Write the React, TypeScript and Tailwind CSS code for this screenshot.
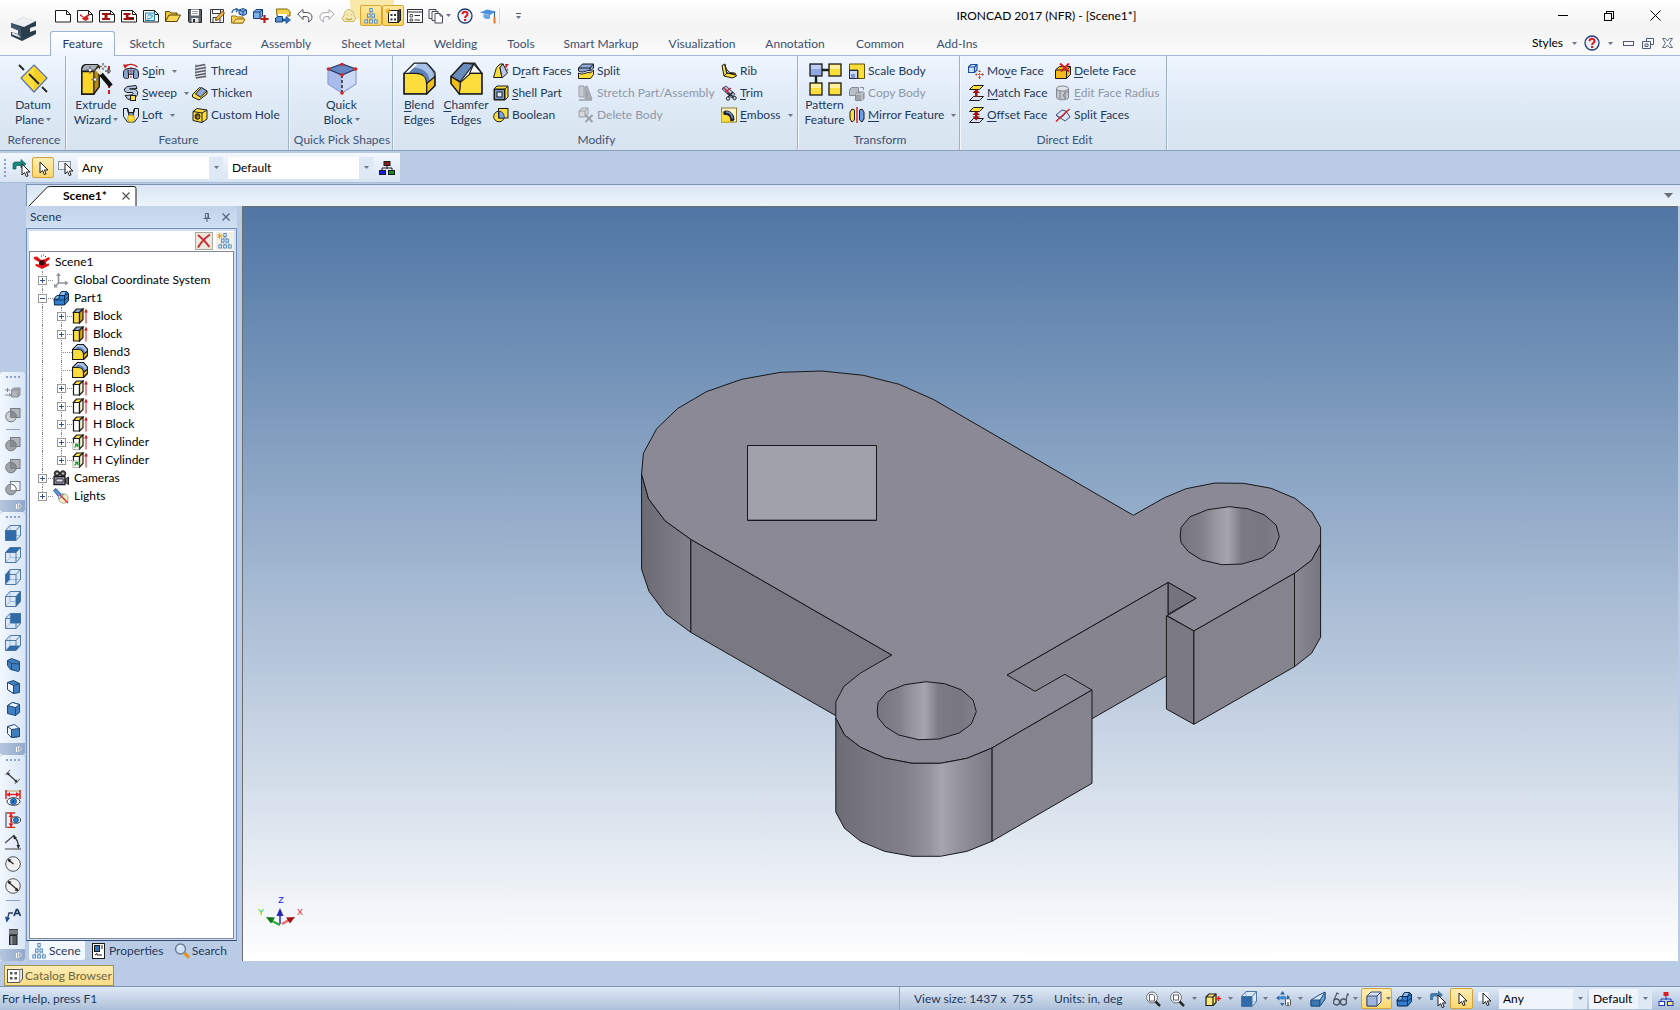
import React from "react";
import type { ReactNode } from "react";

const K = "#1c1c1c";
const Y = "#fbdd3c";
const Y2 = "#d9a514";
const G = "#9aa0a8";

function Svg({ size = 16, box = 16, children }: { size?: number; box?: number; children: ReactNode }) {
  return (
    <svg width={size} height={size} viewBox={`0 0 ${box} ${box}`} fill="none" className="shrink-0" aria-hidden="true">
      {children}
    </svg>
  );
}

/* ---------- shared glyph parts ---------- */

const page = <path d="M.5 2.500h11l4 4v7.500H.5z" fill="#fff" stroke={K} />;
const pageFold = <path d="M11.500 2.500v4h4" stroke={K} />;

function Magnifier({ inner }: { inner: ReactNode }) {
  return (
    <Svg>
      <circle cx="7" cy="6.500" r="5.500" fill="#eef3f9" stroke="#6a6f78" />
      {inner}
      <path d="M10.500 10.500l4.500 4.500" stroke="#2b2b2b" strokeWidth="2.500" />
    </Svg>
  );
}

function BlockFeature({ front, top, link }: { front: string; top: string; link?: boolean }) {
  return (
    <Svg>
      <path d="M1.500 4.500h6v10.500h-6z" fill={front} stroke={K} strokeWidth="1.200" />
      <path d="M1.500 4.500l3-3.500h6.500l-3.500 3.500z" fill={top} stroke={K} strokeWidth="1.200" />
      <path d="M7.500 4.500L11 1v10.500L7.500 15z" fill={front === "#fff" ? "#f6f2d0" : Y2} stroke={K} strokeWidth="1.200" />
      {link && (
        <>
          <rect x="1" y="9" width="6" height="6.500" fill="#fff" stroke="#8fa08f" strokeWidth=".6" />
          <path d="M2.500 13.500L5 11M3 10.500h2.800v2.800" stroke="#1c9e2a" strokeWidth="1.300" />
        </>
      )}
      <path d="M14 15.500V3" stroke="#d11a1a" />
      <path d="M12.200 4.500L14 .500l1.800 4z" fill="#d11a1a" />
    </Svg>
  );
}

function BlendGlyph({ size = 16 }: { size?: number }) {
  const w = size > 20 ? 1.2 : 2.2;
  return (
    <Svg size={size} box={32}>
      <path d="M1 11L11 1h12l8 9v13l-8 8H1z" fill="#f2f6fc" />
      <path d="M10 1h12c5 2 9 7 9 14l-8 7c0-8-3-11-11-11H2z" fill="#5f83b6" />
      <path d="M13 1h7c5 2 9 7 10 13l-4 4C25 10 20 6 9 5z" fill="#a9c1e4" />
      <path d="M1 11L11 1h4L5 11z" fill="#f2f6fc" />
      <path d="M1 11h12c6 0 10 4 10 11v9H1z" fill={Y} stroke={K} strokeWidth={w} />
      <path d="M23 21l8-7v9l-8 8z" fill="#f0be1a" stroke={K} strokeWidth={w} />
      <path d="M1 11L11 1h12l8 9v13l-8 8H1z" stroke={K} strokeWidth={w} />
    </Svg>
  );
}

function ViewCube({ face }: { face: "front" | "top" | "left" | "right" | "back" | "bottom" }) {
  const hi = "#2f6ba8";
  return (
    <Svg>
      <path d="M.5 5.500l4.500-5h10.500v10l-4.500 5H.5z" fill="#dbe8f7" />
      {face === "back" && <path d="M5 .500h10.500v10H5z" fill={hi} />}
      {face === "left" && <path d="M.5 5.500l4.500-5v10l-4.500 5z" fill={hi} />}
      {face === "bottom" && <path d="M.5 15.500l4.500-5h10.500l-4.500 5z" fill={hi} />}
      <path d="M5 .500v10h10.500M5 10.500l-4.500 5" stroke="#8fb0d4" strokeWidth=".8" />
      {face === "front" && <path d="M.5 5.500H11v10H.5z" fill={hi} />}
      {face === "top" && <path d="M.5 5.500l4.500-5h10.500l-4.500 5z" fill={hi} />}
      {face === "right" && <path d="M11 5.500l4.500-5v10l-4.500 5z" fill={hi} />}
      <path d="M.5 5.500l4.500-5h10.500v10l-4.500 5H.5zM.5 5.500H11v10M11 5.500l4.500-5" stroke="#3f6d9c" strokeWidth=".9" />
    </Svg>
  );
}

function IsoCube({ kind }: { kind: number }) {
  const hi = "#3f7fc0";
  const dk = "#1f4878";
  const lt = "#eef5fc";
  return (
    <Svg>
      {kind === 0 && (
        <>
          <path d="M2.500 3.500l4-2 8 3v9l-1 1-8-2-3-4z" fill={hi} stroke={dk} />
          <path d="M2.500 3.500l4 3 8 .5M6.500 6.500v6" stroke={dk} />
        </>
      )}
      {kind === 1 && (
        <>
          <path d="M2.500 3.500l6-2 6 3v9l-6 1-6-4z" fill={hi} stroke={dk} />
          <path d="M2.500 3.500l6 3v8l-6-4z" fill={lt} stroke={dk} />
          <path d="M8.500 6.500l6-2" stroke={dk} />
        </>
      )}
      {kind === 2 && (
        <>
          <path d="M2.500 4.500l5-3 7 2v8l-4 3-8-2z" fill={hi} stroke={dk} />
          <path d="M2.500 4.500l5-3 7 2-4 3z" fill={lt} stroke={dk} />
          <path d="M10.500 6.500v8" stroke={dk} />
        </>
      )}
      {kind === 3 && (
        <>
          <path d="M2.500 3.500l7-2 5 4v8l-8 1-4-4z" fill={lt} stroke={dk} />
          <path d="M6.500 6.500l8-1v8l-8 1z" fill={hi} stroke={dk} />
          <path d="M2.500 3.500l4 3" stroke={dk} />
        </>
      )}
    </Svg>
  );
}

function BoolGlyph({ cut }: { cut?: "sub" | "out" }) {
  return (
    <Svg>
      <rect x="5.500" y="1.500" width="9.500" height="9" fill={cut === "out" ? "#eef2f8" : "#b0b4ba"} stroke="#767c85" />
      <circle cx="6" cy="9.500" r="5.300" fill={cut === "sub" ? "#cdd1d6" : "#a2a6ac"} stroke="#767c85" />
      <path d="M5.500 10.500v-6h1c3 .5 4.700 2.500 4.700 6z" fill={cut === "out" ? "#fff" : "#888d95"} stroke="#767c85" strokeWidth=".8" />
    </Svg>
  );
}

function Cursor({ x = 0, y = 0 }: { x?: number; y?: number }) {
  return (
    <path
      transform={`translate(${x} ${y})`}
      d="M0 0v11l2.600-2.400 1.700 4 1.800-.8-1.700-3.800H8z"
      fill="#fff"
      stroke={K}
      strokeWidth="1"
    />
  );
}

function FacePlates({ arrow }: { arrow: "up" | "both" }) {
  return (
    <Svg>
      <path d="M1.500 4.500l4-4H15.500l-4 4z" fill={Y} stroke={K} />
      <path d="M1.500 15.500l4-4H15.500l-4 4z" fill="#d7e2f6" stroke={K} />
      <path d="M7 5h2.500v7H7z" fill="#a11212" />
      <path d="M4.500 8L8.200 4 12 8z" fill="#a11212" />
      {arrow === "both" && <path d="M4.500 9.500l3.700 4 3.800-4z" fill="#a11212" />}
    </Svg>
  );
}

function TreeGlyph() {
  const node = { fill: "#e4eefa", stroke: "#4d86bd", strokeWidth: 0.9 };
  return (
    <>
      <path d="M8 3L3 13M8 3l5 10M5.800 8L8 13l2.200-5" stroke="#7fa6cc" strokeWidth=".9" />
      <rect x="6.800" y=".500" width="2.400" height="3" {...node} />
      <rect x="4.500" y="6" width="2.600" height="3" {...node} />
      <rect x="8.900" y="6" width="2.600" height="3" {...node} />
      <rect x="1.800" y="12" width="2.800" height="3" {...node} />
      <rect x="6.600" y="12" width="2.800" height="3" {...node} />
      <rect x="11.400" y="12" width="2.800" height="3" {...node} />
    </>
  );
}

function PartGlyph() {
  return (
    <Svg>
      <path d="M1 9l3-3.500h2L8.500 1.500h5L15.500 3.500v7L11.500 15H1.500z" fill="#2e7fd0" stroke="#0c2444" />
      <path d="M6 5.500l2.500-4h5l-2 4zM1 9l3-3.500h2V9z" fill="#8cc0f2" stroke="#0c2444" strokeWidth=".8" />
      <path d="M6 5.500h5.500v4.500H1.200M11.500 5.500V10v5M11.500 5.500l4-2M11.500 10l4-3" stroke="#0c2444" strokeWidth=".8" />
    </Svg>
  );
}

const icons: Record<string, ReactNode> = {
  newDoc: <Svg>{page}{pageFold}</Svg>,
  newScene: (
    <Svg>
      {page}{pageFold}
      <path d="M3 6l4 3 4-2.500 1.500 1-2 1.500 1.500 2-3.500 2-4-2.500 2-1L3 8z" fill="#d81f1f" />
    </Svg>
  ),
  newRail: (
    <Svg>
      {page}{pageFold}
      <path d="M3 5h8v2H8.500v3H11v2H3v-2h2.500V7H3z" fill="#a31414" />
    </Svg>
  ),
  newRail2: (
    <Svg>
      {page}{pageFold}
      <path d="M2.500 5h7v2H7.500v2H13v3H2.500v-2h2.300V7H2.500z" fill="#a31414" />
      <path d="M8.500 10.500h4" stroke="#222" />
    </Svg>
  ),
  newDrawing: (
    <Svg>
      {page}{pageFold}
      <rect x="2.500" y="5" width="9" height="7.500" fill="#d9f0fb" stroke="#2286b8" />
      <path d="M4.500 8.500c1-2.500 4-2.500 5 0M4 10.500c2 1 4 0 5.500-3" stroke="#1f7fb5" />
    </Svg>
  ),
  open: (
    <Svg>
      <path d="M.5 13V3.500h4l1.500 1.500H12V7" fill="#f2c53d" stroke="#5b4305" />
      <path d="M.5 13.500L4 7h11.500L12 13.500z" fill="#f8d65a" stroke="#5b4305" />
    </Svg>
  ),
  save: (
    <Svg>
      <path d="M1.500 1.500h13v13h-12l-1-1z" fill="#5e636b" stroke="#22252a" />
      <rect x="4" y="1.500" width="8" height="6" fill="#fff" />
      <path d="M5 3.500h6M5 5.500h6" stroke="#9aa0a8" />
      <rect x="4.500" y="10" width="7" height="4.500" fill="#e3e6ea" />
      <rect x="6" y="11" width="2" height="3" fill="#22252a" />
    </Svg>
  ),
  saveAs: (
    <Svg>
      <path d="M1.500 1.500h13v13h-13z" fill="#f5f5f5" stroke="#33363b" />
      <path d="M3.500 1.500h8v4h-8zM4 9.500h7v5H4z" fill="#fff" stroke="#33363b" />
      <path d="M6.500 12.500L7 10l6.500-7 2 2L9 12z" fill="#f0b54a" stroke="#7a4d0c" />
    </Svg>
  ),
  partFolder: (
    <Svg>
      <path d="M.5 15V8H5l1 1h6v6z" fill="#f5cf53" stroke="#94700f" />
      <path d="M1 5c0-3 2-4 5-3.500M4.500 0L7 1.700 5 4" stroke="#2a63b0" strokeWidth="1.300" />
      <path d="M8 2l4-1.500L15.500 2v4l-3 1.500L8 6z" fill="#7fb2e8" stroke="#1c4a86" />
      <path d="M8 2l4 1.500L15.500 2M12 3.500v4" stroke="#1c4a86" />
      <path d="M2 15l3-4h9l-2 4z" fill="#fbe083" stroke="#94700f" />
    </Svg>
  ),
  addPart: (
    <Svg>
      <path d="M.5 4L3 1.500h6.500V8L7 10.500H.5z" fill="#7fb0e6" stroke="#123f7d" />
      <path d="M.5 4H7v6.500M7 4l2.500-2.500" stroke="#123f7d" />
      <path d="M11.500 7v8M7.500 11h8" stroke="#b81c1c" strokeWidth="2.200" />
    </Svg>
  ),
  exportPart: (
    <Svg>
      <path d="M1.500 1h11l2.500 2.500V8h-13z" fill="#f7d447" stroke="#7c6410" />
      <rect x="3" y="6" width="9" height="3" fill="#fff" />
      <path d="M.5 10L3 8.500h4.500V14H.5z" fill="#5b92d2" stroke="#123f7d" />
      <path d="M8 11h3V8.500l4.500 3.500-4.500 3.500V13H8z" fill="#2f74c0" stroke="#123f7d" strokeWidth=".7" />
    </Svg>
  ),
  undo: (
    <Svg>
      <path d="M.8 6L6 1.500v3h3.500c3.500 0 5.500 2 5.500 4.500s-1.500 4-3.500 5c.8-2.500.2-5.500-2-5.500H6v3z" fill="#fff" stroke="#4a4f57" />
    </Svg>
  ),
  redo: (
    <Svg>
      <path d="M15.200 6L10 1.500v3H6.500C3 4.500 1 6.500 1 9s1.500 4 3.500 5C3.700 11.500 4.300 8.500 6.500 8.500H10v3z" fill="#fff" stroke="#a2a7ae" />
    </Svg>
  ),
  sceneBrowser: (
    <Svg>
      <path d="M3 8c0-4 2.500-6.500 5-6.500S13 4 13 8l2 2-2 3.500H3L1 10z" fill="#f3e9b4" stroke="#cdb865" />
      <path d="M5.500 7h1M9.500 7h1M5 10.500c2 1.500 4 1.500 6 0" stroke="#c2a548" strokeWidth="1.200" />
    </Svg>
  ),
  tree: <Svg><TreeGlyph /></Svg>,
  catalog: (
    <Svg>
      <path d="M3.500 2.500h9.500v12H3.500z" fill="#fff" stroke={K} />
      <path d="M13 2.500l2.500-1v11l-2.500 2z" fill="#4b4b4b" stroke={K} />
      <path d="M5.500 6h2v2h-2zM9 6h2v2H9zM5.500 10.500h2v2h-2zM9 10.500h2v2H9z" fill="#333" />
      <path d="M3 0v6M0 3h6M1 1l4 4M5 1L1 5" stroke="#f0a81c" strokeWidth=".9" />
    </Svg>
  ),
  props: (
    <Svg>
      <rect x=".5" y="1.500" width="15" height="13" fill="#fff" stroke="#2d2f33" />
      <path d="M.5 4h15" stroke="#2d2f33" />
      <path d="M3 6.500h2.500V9H3zM3 11h2.500v2H3z" stroke="#2d2f33" strokeWidth=".8" />
      <path d="M7.500 7.500H13M7.500 12H13" stroke="#2d2f33" />
    </Svg>
  ),
  copies: (
    <Svg>
      <path d="M1 1.500h7v9H1z" fill="#fff" stroke="#45494f" />
      <path d="M4 3.500h6v9H4z" fill="#fff" stroke="#45494f" />
      <path d="M7 5.500h5l2.500 2.500v7H7z" fill="#fff" stroke="#45494f" />
      <path d="M12 5.500V8h2.500" stroke="#45494f" />
    </Svg>
  ),
  help: (
    <Svg>
      <circle cx="8" cy="8" r="7" fill="#eef3fb" stroke="#1e3c74" strokeWidth="1.300" />
      <path d="M5.500 6.200c0-3.200 5-3.200 5-.2 0 2-2.400 2-2.400 4" stroke="#e01818" strokeWidth="2" />
      <rect x="7" y="11" width="2.200" height="2" fill="#e01818" />
    </Svg>
  ),
  school: (
    <Svg>
      <path d="M0 4.500L7 1.500l9 2L10 7z" fill="#4d8fdc" />
      <path d="M3.500 6v3.500c2 1.800 4.500 2 6.500 1V7z" fill="#6aa5e6" />
      <path d="M14.500 4v5" stroke="#2b57a5" />
      <path d="M13.500 9h2v6.500h-2z" fill="#f0742a" />
    </Svg>
  ),
  datum: (
    <Svg size={32} box={32}>
      <path d="M17 3l13 13-13 14L4 16z" fill={Y} stroke="#5a6fa8" strokeWidth="1.200" />
      <path d="M17 5l11 11-11 12V16z" fill="#f3c51c" opacity=".6" />
      <path d="M2 3l5 5M12 12l10 10M25 25l5 5" stroke="#222" strokeWidth="1.800" />
    </Svg>
  ),
  extrude: (
    <Svg size={34} box={34}>
      <path d="M2 8c0-4 2-6 5-6h12l2 3v20l-6 8H2z" fill={K} />
      <path d="M3 9.500h12V32H3z" fill="#fbd62a" stroke={K} strokeWidth="1.300" />
      <path d="M15 9.500l5-6v21l-5 7z" fill="#b98d10" stroke={K} />
      <path d="M3 8.500C4 4 6 3 8 3h11l-4 5.500z" fill="#a7b0bb" />
      <path d="M30 32v-9M30 4v7" stroke="#d41c1c" strokeWidth="2" strokeDasharray="4 2" />
      <path d="M21 11l11 13" stroke="#111" strokeWidth="4.500" />
      <path d="M18 7l4.500 5" stroke="#e4e4e4" strokeWidth="4" />
      <path d="M11 4v8M7 8h8M24 1v7M20.500 4.500h7M16 14v7M12.500 17.500h7M29 6v6M26 9h6" stroke="#666" strokeWidth="1.300" />
      <path d="M24 3l1.500 1.500L24 6l-1.500-1.500zM11 6.500L12.500 8 11 9.500 9.500 8zM16 16l1.500 1.500L16 19l-1.500-1.500z" fill="#fff" />
    </Svg>
  ),
  spin: (
    <Svg>
      <path d="M.5 9c0-5 15-5 15 0v4.500c0 2-4 3-5 1.500v-3c0-1-5-1-5 0v3c-1 1.500-5 .5-5-1.500z" fill="#88a4cf" stroke={K} />
      <path d="M5.500 12L5 7M10.500 12L11 7" stroke={K} />
      <path d="M2.500 3.500c3-3 8-3 12 .5" stroke="#cc2020" strokeWidth="1.300" />
      <path d="M0 1.500h5L2 6z" fill="#cc2020" />
      <path d="M8 4v11" stroke="#cc2020" strokeDasharray="2 1" />
    </Svg>
  ),
  sweep: (
    <Svg>
      <path d="M13 .500L5 1.500C0 3 .5 7.500 5 7.500h4c2 .5 1.500 2-1 2.500l-6 .5 3 4 6-1.500c5-2 5-8.500-.5-9L6.500 4 14 3.500z" fill="#b8c8e2" stroke={K} />
      <rect x="7.500" y="10.500" width="5" height="5" fill={Y} stroke={K} />
    </Svg>
  ),
  loft: (
    <Svg>
      <path d="M.5 1.500h4l1 4h5l1-4h4v8l-4 5.500h-7l-4-5.500z" fill="#dde6f5" stroke={K} />
      <path d="M4.500 1.500L6 9h4l1.500-7.500-1 4h-5z" fill="#6f8fc0" stroke={K} />
      <circle cx="8" cy="11.500" r="3.400" fill={Y} stroke={Y2} />
    </Svg>
  ),
  thread: (
    <Svg>
      <path d="M4 1h9v14H4z" fill="#e8eaee" />
      <path d="M3 3.500L13 1.500M3 6.500l11-2M3 9.500l11-2M3 12.500l11-2M4 15l10-1.800" stroke="#555c66" strokeWidth="1.400" />
      <path d="M4 1v14M13 1v14" stroke="#7c838d" strokeWidth=".7" />
    </Svg>
  ),
  thicken: (
    <Svg>
      <path d="M.5 9.500l7-7L15 6v3l-8 6-6.500-3z" fill={Y} stroke={K} />
      <path d="M3.500 9l6-6.500L15 6l-6.500 6z" fill="#8faad6" stroke={K} />
    </Svg>
  ),
  hole: (
    <Svg>
      <path d="M1 4.500l4-3 10 1.500v9l-5 3.500-9-2z" fill={Y} stroke={K} />
      <path d="M1 4.500l9 1.500 5-3M10 6v9.500" stroke={K} />
      <ellipse cx="5.500" cy="9.500" rx="2.500" ry="2.800" fill="#5c4a12" stroke={K} />
      <circle cx="6" cy="10" r="1.200" fill="#b98e1a" />
    </Svg>
  ),
  quickBlock: (
    <Svg size={34} box={34}>
      <path d="M3 7l14 6v18L3 22z" fill="#a9bbec" />
      <path d="M17 13l14-6v15l-14 9z" fill="#cddaf6" />
      <path d="M3 7l14-5 14 5-14 6z" fill="#6588c4" stroke="#27345e" strokeWidth="1.200" />
      <path d="M3 7v15l14 9 14-9V7" stroke="#8da2d2" strokeWidth="1.200" />
      <path d="M17 13v17" stroke={K} strokeWidth="1.400" strokeDasharray="3 2" />
      <circle cx="3.500" cy="7" r="1.800" fill="#e02020" />
      <circle cx="17" cy="2.500" r="1.800" fill="#e02020" />
      <circle cx="30.500" cy="7" r="1.800" fill="#e02020" />
      <circle cx="17" cy="13" r="1.800" fill="#e02020" />
      <circle cx="17" cy="31" r="1.800" fill="#e02020" />
    </Svg>
  ),
  blend: <BlendGlyph size={33} />,
  chamfer: (
    <Svg size={33} box={32}>
      <path d="M1 14L13 1h11l7 10v20H9L1 21z" fill="#f2f6fc" />
      <path d="M1 14L13 1l10 1L10 19z" fill="#6a8cbd" stroke={K} strokeWidth="1.100" />
      <path d="M23 2l8 9H19z" fill="#fff" stroke={K} strokeWidth="1.100" />
      <path d="M10 20l10-9h11v20H9z" fill={Y} stroke={K} strokeWidth="1.100" />
      <path d="M1 14l9 6-1 11-8-10z" fill="#f0be1a" stroke={K} strokeWidth="1.100" />
      <path d="M1 14L13 1h11l7 10v20H9L1 21z" stroke={K} strokeWidth="1.200" />
    </Svg>
  ),
  blendSm: <BlendGlyph />,
  draft: (
    <Svg>
      <path d="M.5 14.500l3-10L7 1h3.500L7 4.500l2 10z" fill={Y} stroke={K} />
      <path d="M7 4.500L10 1l4.500 9-5.500 5z" fill="#b7c8e8" stroke={K} />
      <path d="M12.500 3l2.500 5" stroke="#cc2020" strokeWidth="1.200" strokeDasharray="2 1" />
      <path d="M12 1h4l-3 3.500z" fill="#cc2020" />
    </Svg>
  ),
  shell: (
    <Svg>
      <path d="M1 4l3-3h11v11l-3 3H1z" fill={Y} stroke={K} />
      <path d="M1 4h11v11M12 4l3-3" stroke={K} />
      <rect x="1.500" y="4.500" width="10" height="10" fill="#7c9bd0" stroke={K} />
      <rect x="4" y="7" width="5" height="5" fill="#dfe9f9" stroke={K} />
    </Svg>
  ),
  bool: (
    <Svg>
      <circle cx="6" cy="9.500" r="5.300" fill={Y} stroke={K} />
      <rect x="5.500" y="1.500" width="9.500" height="9.500" fill={Y} stroke={K} />
      <path d="M6 11V4.200c3-.2 5.500 2.800 5.300 6.800z" fill="#7fa4e2" stroke="#233d77" />
    </Svg>
  ),
  split: (
    <Svg>
      <path d="M.5 5l4-4h11v4l-3 3c-4-2-6 3-12 0z" fill="#8ea9dc" stroke={K} />
      <path d="M.5 5H12l3.500-4M12 5v3" stroke={K} />
      <path d="M.5 10c5 3 8-2 12 0l3-3v4.500l-3 4H.5z" fill={Y} stroke={K} />
    </Svg>
  ),
  stretch: (
    <Svg>
      <path d="M1 1h5v11H1z" fill="#c8ccd2" stroke={G} />
      <path d="M7 2l2-1 5 13H7z" fill="#aab0b8" stroke={G} />
      <path d="M1 15h13M9 6v6" stroke={G} strokeWidth="1.500" />
    </Svg>
  ),
  deleteBody: (
    <Svg>
      <path d="M1 4l3-3h6v6l-3 3H1z" fill="#d5d8dc" stroke={G} />
      <path d="M1 4h6v6M7 4l3-3" stroke={G} />
      <path d="M7.500 8l7 7M14.500 8l-7 7" stroke={G} strokeWidth="2" />
    </Svg>
  ),
  rib: (
    <Svg>
      <path d="M1 2.500L4 1l1.500 8.500L14 10l1.500 3-4 2L3 13z" fill={Y} stroke={K} />
      <path d="M4 2c1 5 4 8 9 9l-7-1z" fill="#fff" stroke={K} />
      <path d="M3 13l3-3 9 2" stroke={K} />
    </Svg>
  ),
  trim: (
    <Svg>
      <path d="M1 4l4-3 9 8-3 4z" fill="#b3c4e6" stroke="#3a4d7a" />
      <path d="M2 2l8 8M4 7l6-4" stroke="#c22222" strokeWidth="1.200" />
      <path d="M6 8l7 4M12 7l-5 5" stroke={K} strokeWidth="1.200" />
      <circle cx="7" cy="13.500" r="1.700" stroke={K} />
      <circle cx="13.500" cy="13" r="1.700" stroke={K} />
    </Svg>
  ),
  emboss: (
    <Svg>
      <rect x=".5" y="1" width="15" height="14" fill="#fff6c8" stroke="#8b7a2a" />
      <path d="M.5 5v10h9c1-5-3-10-9-10z" fill={Y} stroke={Y2} />
      <path d="M3 4.500c5-2 10 2 10 8.500l-3 1c0-5-3-7-7-6.500z" fill="#16233f" stroke={K} />
      <path d="M5 5c4 0 6 2.500 6.500 6.500" stroke="#7fa0dc" strokeWidth="1.300" />
    </Svg>
  ),
  pattern: (
    <Svg size={34} box={34}>
      <path d="M8 8h17M8 8v17" stroke="#16241a" strokeWidth="2.400" />
      <rect x="2" y="2" width="12" height="12" fill="#92a8e2" stroke={K} strokeWidth="1.300" />
      <rect x="21" y="2" width="12" height="12" fill={Y} stroke={K} strokeWidth="1.300" />
      <rect x="2" y="21" width="12" height="12" fill={Y} stroke={K} strokeWidth="1.300" />
      <rect x="21" y="21" width="12" height="12" fill={Y} stroke={K} strokeWidth="1.300" />
      <path d="M3 3h10v4H3z" fill="#c0cdf2" />
      <path d="M22 3h10v4H22zM3 22h10v4H3zM22 22h10v4H22z" fill="#fdf0a0" />
    </Svg>
  ),
  scale: (
    <Svg>
      <path d="M.5 1h15v14.500H9V7H.5z" fill={Y} stroke="#5e5210" />
      <rect x=".5" y="7.500" width="8" height="8" fill="#cbd8f4" stroke="#1f2c55" />
      <rect x="2" y="11" width="4" height="4" fill="#7d97da" />
    </Svg>
  ),
  copyBody: (
    <Svg>
      <path d="M.5 4.500l2-2h7v6l-2 2h-7z" fill="#b8bdc4" stroke="#868c95" />
      <path d="M6.500 9l2-2H15v6.500l-2 2H6.500z" fill="#9da3ab" stroke="#868c95" />
      <path d="M6.500 9H13v6.500M13 9l2-2" stroke="#d6d9dd" />
      <path d="M11 2.500h3.500V5" stroke="#868c95" />
    </Svg>
  ),
  mirror: (
    <Svg>
      <path d="M1 5l2-3 2.500 1v10L3 15l-2-3z" fill={Y} stroke={K} />
      <path d="M15 5l-2-3-2.500 1v10L13 15l2-3z" fill="#6f9be0" stroke={K} />
      <path d="M8 0v16" stroke="#d01c1c" strokeWidth="1.400" />
    </Svg>
  ),
  moveFace: (
    <Svg>
      <path d="M.5 4L3 1.500h6V7L6.500 9.500h-6z" fill="#cfe2fa" stroke="#1b4fa0" strokeWidth="1.200" />
      <path d="M.5 4h6v5.500M6.500 4L9 1.500" stroke="#1b4fa0" strokeWidth="1.200" />
      <path d="M11.500 7.500v8M7.500 11.500h8" stroke="#b84a3a" strokeDasharray="1.500 1" />
      <path d="M10 9l1.500-2L13 9zM10 14l1.500 2 1.500-2zM9 10l-2 1.500L9 13zM14 10l2 1.500-2 1.500z" fill="#b84a3a" />
    </Svg>
  ),
  matchFace: <FacePlates arrow="up" />,
  offsetFace: <FacePlates arrow="both" />,
  deleteFace: (
    <Svg>
      <path d="M.5 7l4-3.500h11v8l-4 4H.5z" fill="#f4b91c" stroke={K} />
      <path d="M.5 7h11v8.500M11.500 7l4-3.500" stroke={K} />
      <path d="M5 .500l9 8M14 .500l-8 8" stroke="#d42020" strokeWidth="2" />
    </Svg>
  ),
  editRadius: (
    <Svg>
      <path d="M1.500 3.500v9c0 3 12 3 12 0v-9z" fill="#c3c7cd" stroke="#80868f" />
      <ellipse cx="7.500" cy="3.500" rx="6" ry="2.500" fill="#dfe2e6" stroke="#80868f" />
      <path d="M5 6v8M10 6v8M13.500 6L8 10l2 3" stroke="#80868f" />
    </Svg>
  ),
  splitFaces: (
    <Svg>
      <path d="M1 8l6-5 4 1 4 6-5 4z" fill="#dbe6f8" stroke="#3c4f7c" />
      <path d="M1 8c2 3 6 3 8 0l2-4" stroke="#3c4f7c" />
      <path d="M1 14.500L14.500 2" stroke="#d42020" strokeWidth="1.400" />
    </Svg>
  ),
  goCursor: (
    <Svg size={18} box={18}>
      <path d="M1 10V5.500C1 3.500 2 3 4 3h5V.500L14 5 9 9V6.500H5c-1 0-1 .5-1 3.500z" fill="#168a7c" stroke="#0b5d54" strokeWidth=".7" />
      <Cursor x={10} y={5} />
    </Svg>
  ),
  goCursorGray: (
    <Svg size={18} box={18}>
      <path d="M1 10V5.500C1 3.500 2 3 4 3h5V.500L14 5 9 9V6.500H5c-1 0-1 .5-1 3.500z" fill="#4a7ba8" />
      <Cursor x={9} y={5} />
    </Svg>
  ),
  pointer: <Svg><Cursor x={5} y={2} /></Svg>,
  boxSelect: (
    <Svg>
      <rect x=".5" y="1.500" width="12" height="8" fill="#eef2f6" stroke="#8c949e" />
      <Cursor x={7} y={3} />
    </Svg>
  ),
  boxSelect2: (
    <Svg>
      <path d="M0 1h11v9H0z" fill="#f4f7fb" />
      <Cursor x={5} y={2} />
    </Svg>
  ),
  org: (
    <Svg>
      <path d="M8 5v4M3 11V8h10v3" stroke={K} />
      <rect x="5" y="1.500" width="6" height="4" fill="#8d1c1c" stroke={K} />
      <rect x=".5" y="10.500" width="6" height="4" fill="#1a1ae0" stroke={K} />
      <rect x="9.500" y="10.500" width="6" height="4" fill="#118a1e" stroke={K} />
    </Svg>
  ),
  orgBlue: (
    <Svg>
      <path d="M8 5v4M3 11V8h10v3" stroke="#2038b8" />
      <rect x="5.500" y="1" width="5" height="4" fill="#d82020" />
      <rect x="1" y="10.500" width="5.500" height="4" fill="#fff" stroke="#2038b8" />
      <rect x="9.500" y="10.500" width="5.500" height="4" fill="#f4e37a" stroke="#2038b8" />
    </Svg>
  ),
  sceneRoot: (
    <Svg>
      <path d="M0 3l3-.5L7 6l3-.5L15 3l1 2-4 3 .5 2L15 9.500v2L8 15l-7-3.500 1-1.500 3 .5V8L0 5z" fill="#e01414" />
      <path d="M6 6.500l4-.5 1 4-3 1.500L5 10z" fill="#1b0808" opacity=".85" />
      <path d="M7 2h1M11 2.500h1M9 1h1" stroke="#333" />
    </Svg>
  ),
  axes: (
    <Svg>
      <path d="M5.500 11V2M5.500 11H14M5.500 11L2 14.500" stroke="#8f959d" strokeWidth="1.600" />
      <path d="M3 4l2.500-3.500L8 4zM12 8.500l3.500 2.500L12 13.500zM1 11.500v4h4z" fill="#8f959d" />
    </Svg>
  ),
  part: <PartGlyph />,
  block: <BlockFeature front={Y} top="#8faad0" />,
  hBlock: <BlockFeature front="#fff" top={Y} />,
  hCyl: <BlockFeature front="#fff" top={Y} link />,
  camera: (
    <Svg>
      <circle cx="4" cy="3.500" r="2.700" fill="#4a4a4a" stroke={K} />
      <circle cx="10" cy="3.500" r="2.700" fill="#4a4a4a" stroke={K} />
      <circle cx="4" cy="3.500" r="1" fill="#d8d8d8" />
      <circle cx="10" cy="3.500" r="1" fill="#d8d8d8" />
      <path d="M1 6.500h11v8H1z" fill="#9c94b4" stroke={K} strokeWidth="1.300" />
      <path d="M3 9h7v3H3z" fill="#e4e0f0" stroke={K} strokeWidth=".8" />
      <path d="M12.500 9l3-2v7.500l-3-2z" fill="#6b6b6b" stroke={K} />
    </Svg>
  ),
  light: (
    <Svg>
      <path d="M.5 2.500L3 .500 8 6 5.500 8.500z" fill="#5b94d6" stroke="#1c3f74" strokeWidth=".8" />
      <circle cx="10.500" cy="10.500" r="4.700" fill="#f6efc6" stroke="#a8a48a" />
      <path d="M5 8.500l2.500-2.500 3 .5-4 4.500z" fill="#cfe0f2" stroke="#51739e" strokeWidth=".8" />
      <path d="M7 7l8 8" stroke="#d02020" strokeWidth="1.200" />
    </Svg>
  ),
  clear: (
    <Svg>
      <path d="M2 2c4 3 8 7 11.500 12M14 1.500C9 5 5 9 2 14.500" stroke="#c8303a" strokeWidth="2" />
    </Svg>
  ),
  treeStar: (
    <Svg>
      <TreeGlyph />
      <path d="M2.500 0v6M0 3h6M.8 1l4 4M4.800 1l-4 4" stroke="#e6a31c" strokeWidth=".9" />
    </Svg>
  ),
  propsTab: (
    <Svg>
      <rect x="1.500" y=".500" width="12" height="15" fill="#fff" stroke={K} />
      <rect x="3.500" y="2.500" width="5" height="6" fill="#2f6fc0" stroke={K} />
      <path d="M10 3h2M10 5h2M4 12l2-1.500V12h5" stroke={K} />
    </Svg>
  ),
  search: (
    <Svg>
      <circle cx="6.500" cy="6" r="5" fill="#cfe3f8" stroke="#6b7f98" strokeWidth="1.400" />
      <path d="M4 5c.5-1.500 2-2.300 3.500-2" stroke="#fff" />
      <path d="M10.500 10l4.500 4.500" stroke="#e0951c" strokeWidth="3.200" />
    </Svg>
  ),
  catalogBox: (
    <Svg>
      <rect x=".5" y="1.500" width="12" height="13" fill="#fff" stroke="#555" />
      <path d="M12.500 1.500l3-.5v10l-3 3.500" fill="#e4e4e4" stroke="#555" />
      <path d="M3 4h2.500v2.500H3zM7.500 4H10v2.500H7.500zM3 9h2.500v2.500H3zM7.500 9H10v2.500H7.500z" fill="#555" />
    </Svg>
  ),
  sheetGray: (
    <Svg>
      <path d="M6.500 5l2-2H15v7l-2 2H6.500z" fill="#b2b6bc" stroke="#868b93" />
      <path d="M6.500 5H13v7M13 5l2-2" stroke="#868b93" />
      <path d="M0 5h5M2.500 3v4M0 10h5M4 8.500L6 10l-2 1.500" stroke="#868b93" />
    </Svg>
  ),
  bool1: <BoolGlyph cut="sub" />,
  bool2: <BoolGlyph />,
  bool3: <BoolGlyph />,
  bool4: <BoolGlyph cut="out" />,
  dimAlign: (
    <Svg>
      <path d="M2.500 5.500l9 8" stroke="#333" strokeWidth="1.200" />
      <path d="M.5 7L5 2M9.500 16l5.500-5" stroke="#555" />
      <path d="M1.500 4.500l3.500.5-2 2.500zM12.800 14.500l-3.500-.5 2-2.500z" fill="#333" />
    </Svg>
  ),
  dimH: (
    <Svg>
      <path d="M0 1h16" stroke="#cfc7a8" strokeWidth="2" />
      <path d="M1 0v9M15 0v9M1 4.500h14" stroke="#e02020" strokeWidth="1.500" />
      <path d="M1.500 4.500L5 2v5zM14.500 4.500L11 2v5z" fill="#e02020" />
      <ellipse cx="8.500" cy="11.500" rx="6.500" ry="3.800" fill="#fff" stroke="#333" />
      <circle cx="8.500" cy="11.500" r="3" fill="#2b86da" stroke="#0e4f96" />
      <circle cx="8.500" cy="11.500" r="1" fill="#0a2344" />
    </Svg>
  ),
  dimV: (
    <Svg>
      <path d="M1 0v16" stroke="#333" />
      <path d="M2 1h8M2 15.500h8M6 1v14" stroke="#e02020" strokeWidth="1.500" />
      <path d="M6 1.500L3.500 5h5zM6 15l-2.500-3.500h5z" fill="#e02020" />
      <ellipse cx="11" cy="8" rx="4.500" ry="3.200" fill="#fff" stroke="#333" />
      <circle cx="11" cy="8" r="2.400" fill="#2b86da" stroke="#0e4f96" />
    </Svg>
  ),
  dimAngle: (
    <Svg>
      <path d="M0 9l9.500-8M0 15h16" stroke="#444" strokeWidth="1.200" />
      <path d="M9 3c3 2 4.500 6 4.500 11" stroke="#222" strokeWidth="1.200" />
      <path d="M8 1l4 2.500-3 2zM13.500 15l-2-4h3.500z" fill="#222" />
    </Svg>
  ),
  dimRadius: (
    <Svg>
      <circle cx="8" cy="8" r="7.300" fill="#f1f1f1" stroke="#555" />
      <path d="M3.500 4l5 4" stroke="#222" strokeWidth="1.200" />
      <path d="M2.500 3l4 .5L4 6.500z" fill="#222" />
    </Svg>
  ),
  dimDiameter: (
    <Svg>
      <circle cx="8" cy="8" r="7.300" fill="#f1f1f1" stroke="#555" />
      <path d="M3.500 4l9 8" stroke="#222" strokeWidth="1.200" />
      <path d="M2.500 3l4 .5L4 6.500zM13.500 13l-4-.5 2.500-3z" fill="#222" />
    </Svg>
  ),
  leader: (
    <Svg>
      <path d="M2 14L4 6h4" stroke="#2a3f5f" strokeWidth="1.300" />
      <path d="M0 9.500l1.500 6L5 11z" fill="#1f4f86" />
      <path d="M9 9l2.500-6.500h1L15.500 9M10 6.500h4.500" stroke="#1d3558" strokeWidth="1.700" />
    </Svg>
  ),
  bolt: (
    <Svg>
      <path d="M4.500 6.500h7.500V16H4.500z" fill="#555a60" stroke="#222" />
      <path d="M6.500 7v8.500" stroke="#9da2a8" strokeWidth="1.500" />
      <path d="M4 .800h9M4 3h9M4 5.200h9" stroke="#111" strokeWidth="1.200" />
    </Svg>
  ),
  zoomPage: <Magnifier inner={<path d="M4.500 3.500h3.500l1.500 1.500v5h-5z" fill="#fff" stroke="#444" strokeWidth=".8" />} />,
  zoomWin: <Magnifier inner={<rect x="4.500" y="4" width="5" height="5" fill="#fff" stroke="#444" strokeWidth=".8" />} />,
  camView: (
    <Svg>
      <path d="M1 6l3-3h7v8.500l-3 3H1z" fill="#fbe873" stroke={K} strokeWidth="1.200" />
      <path d="M1 6h7v8.500M8 6l3-3" stroke={K} strokeWidth="1.200" />
      <path d="M10.500 7.500H16M13.500 5v5" stroke="#e02020" strokeWidth="1.300" />
    </Svg>
  ),
  cubeBlue: <ViewCube face="front" />,
  orbit: (
    <Svg>
      <path d="M6.500 0L9 3.500H4zM0 7l3.500-2.500v5zM14 6l-3-2v4zM6.500 15L4 12h4z" fill="#2e6398" />
      <path d="M3 7c2-3 6-3 8 0-2 2-6 2-8 0z" fill="#3b8ad8" />
      <path d="M9.500 8.500c0-1 5-1 5 0v5.500c0 1-5 1-5 0z" fill="#fff" stroke="#555" />
      <path d="M11 11h2v3h-2z" fill="#888" />
    </Svg>
  ),
  wedge: (
    <Svg>
      <path d="M1 9l9-5.500 5-2.500v7l-5 7H1z" fill="#d5e4f4" stroke="#1f4f80" />
      <path d="M1 9h9v6H1z" fill="#3f79b3" stroke="#1f4f80" />
      <path d="M10 9l5-8v7l-5 7z" fill="#6ea0d2" stroke="#1f4f80" />
    </Svg>
  ),
  glasses: (
    <Svg>
      <circle cx="3.500" cy="11" r="3" stroke="#4b5563" strokeWidth="1.300" />
      <circle cx="10.500" cy="11" r="3" stroke="#4b5563" strokeWidth="1.300" />
      <path d="M1 9l3-7 2 1M13 9l1.500-6 1.500 1M6.500 10.500h1" stroke="#4b5563" strokeWidth="1.200" />
    </Svg>
  ),
  cubePlain: (
    <Svg>
      <path d="M1 5l4-4h10v10l-4 4H1z" fill="#d8e2f4" stroke="#3b4d74" />
      <path d="M1 5h10v10H1zM11 5l4-4" fill="#9fb5de" stroke="#3b4d74" />
    </Svg>
  ),
  ...Object.fromEntries(
    (["front", "top", "left", "right", "back", "bottom"] as const).map((f) => ["v_" + f, <ViewCube face={f} />]),
  ),
  iso0: <IsoCube kind={0} />,
  iso1: <IsoCube kind={1} />,
  iso2: <IsoCube kind={2} />,
  iso3: <IsoCube kind={3} />,
};

/* ---------- small pieces ---------- */

function Caret() {
  return (
    <svg width="5" height="3" viewBox="0 0 5 3" className="inline-block shrink-0 text-[#6b7686]" aria-hidden="true">
      <path d="M0 0h5L2.500 3z" fill="currentColor" />
    </svg>
  );
}

/* "_" marks the access key that follows it */
function Mnemonic({ text }: { text: string }) {
  const i = text.indexOf("_");
  if (i < 0) return <>{text}</>;
  return (
    <>
      {text.slice(0, i)}
      <span className="underline underline-offset-2">{text[i + 1]}</span>
      {text.slice(i + 2)}
    </>
  );
}

function SmallButton({ icon, label, menu, disabled }: { icon: string; label: string; menu?: boolean; disabled?: boolean }) {
  return (
    <button disabled={disabled} className={"flex h-[22px] items-center gap-[3px] whitespace-nowrap " + (disabled ? "text-[#8d97a6]" : "text-[#1e395b]")}>
      {icons[icon]}
      <span>
        <Mnemonic text={label} />
      </span>
      {menu && (
        <span className="flex pl-1">
          <Caret />
        </span>
      )}
    </button>
  );
}

function BigButton({ icon, lines, menu, width }: { icon: string; lines: [string, string]; menu?: boolean; width: string }) {
  return (
    <button className={"flex shrink-0 flex-col items-center pt-[2px] pl-[2px] leading-[15px] whitespace-nowrap text-[#1e395b] " + width}>
      <span className="flex h-[35px] items-start justify-center">{icons[icon]}</span>
      <span>
        <Mnemonic text={lines[0]} />
      </span>
      <span className="flex items-center gap-[2px]">
        {lines[1]}
        {menu && <Caret />}
      </span>
    </button>
  );
}

function Group({ label, width, children }: { label: string; width: string; children: ReactNode }) {
  return (
    <section aria-label={label} className={"flex shrink-0 flex-col border-r border-[#9db0cc] shadow-[1px_0_0_#f3f8fe] " + width}>
      <div className="flex h-[74px] pt-1">{children}</div>
      <div className="flex h-5 items-center justify-center pl-[3px] whitespace-nowrap text-[#3b5377]">{label}</div>
    </section>
  );
}

function Col({ width = "", children }: { width?: string; children: ReactNode }) {
  return <div className={"flex shrink-0 flex-col items-start " + width}>{children}</div>;
}

function Combo({ label, value, options, className }: { label: string; value: string; options: string[]; className: string }) {
  return (
    <div className={"relative flex items-center " + className}>
      <select aria-label={label} defaultValue={value} className="size-full appearance-none rounded-none bg-transparent pt-px pr-4 pl-1 text-black outline-none">
        {options.map((o) => (
          <option key={o}>{o}</option>
        ))}
      </select>
      <span className="pointer-events-none absolute inset-y-0 right-0 flex w-[14px] items-center justify-center bg-[#dfe9f6]">
        <Caret />
      </span>
    </div>
  );
}

/* ---------- title bar and ribbon ---------- */

const quickIcons: [string, string][] = [
  ["newDoc", "New"],
  ["newScene", "New scene"],
  ["newRail", "New drawing"],
  ["newRail2", "New layout"],
  ["newDrawing", "New sheet"],
  ["open", "Open"],
  ["save", "Save"],
  ["saveAs", "Save as"],
  ["partFolder", "Insert part"],
  ["addPart", "Add part"],
  ["exportPart", "Export part"],
  ["undo", "Undo"],
  ["redo", "Redo"],
  ["sceneBrowser", "Browser"],
  ["tree", "Scene browser"],
  ["catalog", "Catalog browser"],
  ["props", "Properties"],
];

const tabs: [string, string][] = [
  ["Sketch", "w-16"],
  ["Surface", "w-[66px]"],
  ["Assembly", "w-[82px]"],
  ["Sheet Metal", "w-[92px]"],
  ["Welding", "w-[73px]"],
  ["Tools", "w-[58px]"],
  ["Smart Markup", "w-[102px]"],
  ["Visualization", "w-[100px]"],
  ["Annotation", "w-[86px]"],
  ["Common", "w-[84px]"],
  ["Add-Ins", "w-[70px]"],
];

function Header() {
  return (
    <header className="relative flex h-[55px] shrink-0 bg-linear-to-b from-white via-[#f3f3f4] to-[#fbfbfb]">
      <div className="pointer-events-none absolute top-0 left-[350px] h-6 w-11 overflow-hidden">
        <div className="-mt-5 size-11 rounded-full bg-[#f8e9a8]" />
      </div>
      <button aria-label="Application menu" className="flex w-[50px] shrink-0 items-center justify-center pr-[2px]">
        <svg width="28" height="28" viewBox="0 0 28 28" aria-hidden="true">
          <path d="M1 9l12-6 13 4-12 6z" fill="#eceff2" stroke="#c3cad1" strokeWidth=".6" strokeDasharray="1 1" />
          <path d="M1 9l13 4 12-6v5l-6 2v4l6-2v4l-14 7-11-5v-4l7 2v-4l-7-3z" fill="#2a3d4c" />
          <path d="M1 9l10 4.500V24L8 20.500v-4l-7-3z" fill="#40566a" />
          <path d="M2 18.500l6 2 3 3.500-9-3.500z" fill="#dfe5ea" />
        </svg>
      </button>
      <div className="relative flex min-w-0 flex-1 flex-col">
        <div className="flex h-[31px] shrink-0">
          <div className="flex w-[503px] shrink-0 items-center pl-[2px]">
            {quickIcons.map(([id, name]) => (
              <button
                key={id}
                title={name}
                className={
                  "flex h-[21px] w-[22px] shrink-0 items-center justify-center " +
                  (id === "tree" || id === "catalog" ? "rounded-xs border border-[#d8a634] bg-linear-to-b from-[#fde79c] to-[#fbd35c]" : "")
                }
              >
                {icons[id]}
              </button>
            ))}
            <button title="Windows" className="flex h-[21px] w-7 items-center gap-[2px] pl-[2px]">
              {icons.copies}
              <Caret />
            </button>
            <button title="Help" className="flex w-[22px] justify-center">{icons.help}</button>
            <button title="Learn" className="flex w-6 justify-center border-r border-[#d5d8dc]">{icons.school}</button>
            <button title="Customize toolbar" className="flex w-9 flex-col items-center gap-[2px]">
              <span className="h-px w-[5px] bg-[#555]" />
              <Caret />
            </button>
          </div>
          <h1 className="flex flex-1 items-center justify-center text-black">IRONCAD 2017 (NFR) - [Scene1*]</h1>
          <div className="flex shrink-0">
            <button aria-label="Minimize" className="flex w-[46px] items-center justify-center">
              <span className="h-px w-[10px] bg-black" />
            </button>
            <button aria-label="Restore" className="flex w-[46px] items-center justify-center">
              <svg width="10" height="10" viewBox="0 0 10 10" fill="none" stroke="#000" shapeRendering="crispEdges" aria-hidden="true">
                <path d="M.5 2.500h7v7h-7zM2.500 2.500v-2h7v7h-2" />
              </svg>
            </button>
            <button aria-label="Close" className="mr-[2px] flex w-[46px] items-center justify-center">
              <svg width="11" height="11" viewBox="0 0 11 11" stroke="#000" aria-hidden="true">
                <path d="M.5 .500l10 10M10.500 .500l-10 10" />
              </svg>
            </button>
          </div>
        </div>
        <nav className="flex h-6 shrink-0 text-[#3b4f70]">
          <button className="relative z-10 -mb-px h-[25px] w-[65px] rounded-t-[3px] border border-b-0 border-[#9cb2d2] bg-linear-to-b from-white to-[#eef5fe] text-[#1e395b]">
            Feature
          </button>
          {tabs.map(([t, w]) => (
            <button key={t} className={"pt-[2px] " + w}>
              {t}
            </button>
          ))}
          <div className="ml-auto flex items-center pr-[7px] text-black">
            <button className="flex items-center gap-[9px] pr-[7px]">
              Styles <Caret />
            </button>
            <button aria-label="Help" className="flex items-center gap-[8px] pr-[10px]">
              {icons.help}
              <Caret />
            </button>
            <button aria-label="Minimize document" className="mr-2 mt-px h-[5px] w-[11px] border border-[#4d5a75]" />
            <button aria-label="Restore document" className="mr-2">
              <svg width="12" height="11" viewBox="0 0 12 11" fill="none" stroke="#4d5a75" aria-hidden="true">
                <path d="M.5 3.500h8v7h-8zM4.500 3.500v-3h7v6h-3" />
                <path d="M3 6h3v2.500H3z" />
              </svg>
            </button>
            <button aria-label="Close document">
              <svg width="11" height="10" viewBox="0 0 11 10" fill="none" stroke="#4d5a75" strokeWidth=".9" aria-hidden="true">
                <path d="M.5 .500h3l2 2.500 2-2.500h3L7.500 5l3 4.500h-3l-2-2.500-2 2.500h-3l3-4.500z" />
              </svg>
            </button>
          </div>
        </nav>
      </div>
    </header>
  );
}

function Ribbon() {
  return (
    <div className="flex h-24 shrink-0 border-y border-t-[#a3b8d6] border-b-[#8ba0c0] bg-linear-to-b from-[#eef5fe] via-[#dfeaf7] to-[#d8e3f0]">
      <Group label="Reference" width="w-[66px]">
        <BigButton icon="datum" lines={["Datum", "Plane"]} menu width="w-16" />
      </Group>
      <Group label="Feature" width="w-[223px]">
        <div className="w-1" />
        <BigButton icon="extrude" lines={["Extrude", "Wizard"]} menu width="w-[50px]" />
        <div className="w-[3px]" />
        <Col width="w-[69px]">
          <SmallButton icon="spin" label="S_pin" menu />
          <SmallButton icon="sweep" label="_Sweep" menu />
          <SmallButton icon="loft" label="_Loft" menu />
        </Col>
        <Col>
          <SmallButton icon="thread" label="Thread" />
          <SmallButton icon="thicken" label="Thicken" />
          <SmallButton icon="hole" label="Custom Hole" />
        </Col>
      </Group>
      <Group label="Quick Pick Shapes" width="w-[104px]">
        <BigButton icon="quickBlock" lines={["Quick", "Block"]} menu width="w-full" />
      </Group>
      <Group label="Modify" width="w-[405px]">
        <div className="w-[2px]" />
        <BigButton icon="blend" lines={["_Blend", "Edges"]} width="w-[46px]" />
        <BigButton icon="chamfer" lines={["_Chamfer", "Edges"]} width="w-12" />
        <div className="w-1" />
        <Col width="w-[85px]">
          <SmallButton icon="draft" label="D_raft Faces" />
          <SmallButton icon="shell" label="_Shell Part" />
          <SmallButton icon="bool" label="Boolean" />
        </Col>
        <Col width="w-[143px]">
          <SmallButton icon="split" label="Split" />
          <SmallButton icon="stretch" label="Stretch Part/Assembly" disabled />
          <SmallButton icon="deleteBody" label="Delete Body" disabled />
        </Col>
        <Col>
          <SmallButton icon="rib" label="Rib" />
          <SmallButton icon="trim" label="_Trim" />
          <SmallButton icon="emboss" label="_Emboss" menu />
        </Col>
      </Group>
      <Group label="Transform" width="w-[162px]">
        <BigButton icon="pattern" lines={["Pattern", "Feature"]} width="w-[51px]" />
        <Col>
          <SmallButton icon="scale" label="Scale Body" />
          <SmallButton icon="copyBody" label="Copy Body" disabled />
          <SmallButton icon="mirror" label="_Mirror Feature" menu />
        </Col>
      </Group>
      <Group label="Direct Edit" width="w-[207px]">
        <div className="w-2" />
        <Col width="w-[87px]">
          <SmallButton icon="moveFace" label="Mo_ve Face" />
          <SmallButton icon="matchFace" label="_Match Face" />
          <SmallButton icon="offsetFace" label="_Offset Face" />
        </Col>
        <Col>
          <SmallButton icon="deleteFace" label="_Delete Face" />
          <SmallButton icon="editRadius" label="_Edit Face Radius" disabled />
          <SmallButton icon="splitFaces" label="Split _Faces" />
        </Col>
      </Group>
    </div>
  );
}

const hot = "rounded-xs border border-[#d5a23a] bg-linear-to-b from-[#fdedb4] to-[#fbd76b]";

function SelectionBar() {
  return (
    <div className="h-[33px] shrink-0 bg-[#bacce5] pt-[2px]">
      <div className="flex h-[30px] w-[400px] items-center border-b border-[#a9bcd8] bg-linear-to-b from-[#f2f7fd] to-[#d8e4f3]">
        <div className="ml-1 flex w-[6px] flex-col gap-[2px]">
          {[0, 1, 2, 3, 4].map((i) => (
            <span key={i} className="size-[2px] bg-[#8aa2c6]" />
          ))}
        </div>
        <button title="Redirect selection" className="flex w-[22px] justify-center">{icons.goCursor}</button>
        <button title="Select" className={"flex h-[21px] w-[22px] items-center justify-center " + hot}>
          {icons.pointer}
        </button>
        <button title="Box select" className="flex w-6 justify-center">{icons.boxSelect}</button>
        <Combo label="Selection filter" value="Any" options={["Any", "Part", "Face", "Edge"]} className="h-[22px] w-[145px] bg-white" />
        <Combo label="Configuration" value="Default" options={["Default"]} className="ml-[5px] h-[22px] w-[145px] bg-white" />
        <button title="Configurations" className="flex flex-1 justify-center">{icons.org}</button>
      </div>
    </div>
  );
}

/* ---------- left tool strip ---------- */

function Strip({ items }: { items: (string | null)[] }) {
  return (
    <div className="flex w-[25px] flex-col rounded-t-[3px] bg-linear-to-r from-[#f1f7fe] to-[#d9e6f5]">
      <div className="flex h-[10px] items-center justify-center gap-[2px]">
        {[0, 1, 2, 3].map((i) => (
          <span key={i} className="size-[2px] bg-[#8aa2c6]" />
        ))}
      </div>
      {items.map((id, i) =>
        id ? (
          <button key={id} title={id} className="flex h-[22px] items-center justify-center">
            {icons[id]}
          </button>
        ) : (
          <div key={i} className="flex h-[7px] items-center justify-center">
            <span className="h-px w-[14px] bg-[#8fa3bf]" />
          </div>
        ),
      )}
      <button aria-label="More buttons" className="mt-px flex h-3 items-center justify-end gap-px rounded-b-[3px] bg-linear-to-r from-[#b5c6df] to-[#93a8c8] pr-[3px]">
        <span className="h-[5px] w-px bg-white" />
        <svg width="4" height="6" viewBox="0 0 4 6" aria-hidden="true">
          <path d="M.5 .500v5L3.500 3z" fill="#8893a5" stroke="#fff" strokeWidth=".7" />
        </svg>
      </button>
    </div>
  );
}

function LeftStrips() {
  return (
    <aside className="flex w-[26px] shrink-0 flex-col justify-end pb-[2px]">
      <Strip items={["sheetGray", "bool1", null, "bool2", "bool3", "bool4"]} />
      <Strip items={["v_front", "v_top", "v_left", "v_right", "v_back", "v_bottom", "iso0", "iso1", "iso2", "iso3"]} />
      <Strip items={["dimAlign", "dimH", "dimV", "dimAngle", "dimRadius", "dimDiameter", null, "leader", "bolt"]} />
    </aside>
  );
}

/* ---------- scene tree ---------- */

type Row = { level: 1 | 2; icon: string; label: string; box?: "+" | "-"; last?: boolean };

const rows: Row[] = [
  { level: 1, icon: "axes", label: "Global Coordinate System", box: "+" },
  { level: 1, icon: "part", label: "Part1", box: "-" },
  { level: 2, icon: "block", label: "Block", box: "+" },
  { level: 2, icon: "block", label: "Block", box: "+" },
  { level: 2, icon: "blendSm", label: "Blend3" },
  { level: 2, icon: "blendSm", label: "Blend3" },
  { level: 2, icon: "hBlock", label: "H Block", box: "+" },
  { level: 2, icon: "hBlock", label: "H Block", box: "+" },
  { level: 2, icon: "hBlock", label: "H Block", box: "+" },
  { level: 2, icon: "hCyl", label: "H Cylinder", box: "+" },
  { level: 2, icon: "hCyl", label: "H Cylinder", box: "+", last: true },
  { level: 1, icon: "camera", label: "Cameras", box: "+" },
  { level: 1, icon: "light", label: "Lights", box: "+", last: true },
];

function Guide({ branch, last, box }: { branch?: boolean; last?: boolean; box?: "+" | "-" }) {
  return (
    <span className="relative flex h-full w-[19px] shrink-0 items-center">
      <span className={"absolute top-0 left-2 border-l border-dotted border-[#8a8a8a] " + (last ? "h-1/2" : "h-full")} />
      {branch && <span className="absolute top-1/2 left-2 w-[11px] border-t border-dotted border-[#8a8a8a]" />}
      {box && (
        <span className="relative ml-1 flex size-[9px] items-center justify-center border border-[#9a9a9a] bg-white">
          <span className="absolute h-px w-[5px] bg-[#3a4f8c]" />
          {box === "+" && <span className="absolute h-[5px] w-px bg-[#3a4f8c]" />}
        </span>
      )}
    </span>
  );
}

function SceneTree() {
  return (
    <ul role="tree" className="flex-1 overflow-hidden border border-[#7f8893] bg-white pt-px pl-1 text-black">
      <li role="treeitem" className="flex h-[18px] items-center gap-[5px]">
        {icons.sceneRoot}
        Scene1
      </li>
      {rows.map((r, i) => (
        <li key={i} role="treeitem" className="flex h-[18px] items-center whitespace-nowrap">
          {r.level === 2 && <Guide />}
          <Guide branch last={r.last} box={r.box} />
          <span className="mr-[5px] flex">{icons[r.icon]}</span>
          {r.label}
        </li>
      ))}
    </ul>
  );
}

function ScenePanel() {
  return (
    <section aria-label="Scene" className="flex w-[216px] shrink-0 flex-col bg-[#bacce5] pr-[5px]">
      <div className="flex h-[22px] shrink-0 items-center bg-linear-to-b from-[#c2d2e9] to-[#cfdff3] pr-[7px] pl-1 text-[#1e395b]">
        <h2 className="flex-1">Scene</h2>
        <button aria-label="Pin" className="mr-[11px]">
          <svg width="8" height="9" viewBox="0 0 8 9" fill="none" stroke="#58657a" aria-hidden="true">
            <path d="M2.500 .500h3v4.500h-3zM.500 5.500h7M4 5.500V9M5 .500V5" />
          </svg>
        </button>
        <button aria-label="Close panel">
          <svg width="8" height="8" viewBox="0 0 8 8" stroke="#58657a" strokeWidth="1.400" aria-hidden="true">
            <path d="M.5 .500l7 7M7.500 .500l-7 7" />
          </svg>
        </button>
      </div>
      <div className="flex min-h-0 flex-1 flex-col border border-[#6f8db8] border-b-[#2f4b7c] bg-[#d3e0f1] px-[2px] pt-[2px] pb-px">
        <div className="flex h-5 shrink-0 items-center bg-white">
          <input aria-label="Search the scene" className="h-full min-w-0 flex-1 px-1 outline-none" />
          <button aria-label="Clear search" className="mr-[3px] flex size-[18px] items-center justify-center border border-[#a9a9a0] bg-[#ece9dd]">
            {icons.clear}
          </button>
          <button aria-label="Tree options" className="flex size-[18px] items-center justify-center bg-[#f2f0e6]">{icons.treeStar}</button>
        </div>
        <SceneTree />
      </div>
      <div className="flex h-[22px] shrink-0 items-start pl-[3px] text-[#1e395b]">
        <button className="flex h-[19px] w-14 items-center gap-[2px] rounded-b-xs bg-[#f3f8fe] pl-[2px]">
          {icons.tree}
          Scene
        </button>
        <button className="ml-[6px] flex h-[19px] items-center gap-[2px]">
          {icons.propsTab}
          Properties
        </button>
        <button className="ml-auto flex h-[19px] items-center gap-[2px] pr-[10px]">
          {icons.search}
          Search
        </button>
      </div>
    </section>
  );
}

/* ---------- 3D view ---------- */

const topFace =
  "641.600,474 643.400,453.300 656.700,428.700 677.400,408.700 706.300,391.700 741.700,379.300 780.700,372.300 822,371 863.300,375.300 899.200,384.300 933.100,399.300 1133.300,515.300 1164.500,497.700 1186.100,488.700 1215,483 1243.500,483.300 1271.100,488.300 1294.900,498.300 1311.900,512 1320.600,527.300 1320.600,544 1311.500,560.300 1294.500,573.300 1193.900,631 1167.300,615.700 1196.200,598.300 1168.200,582.300 1007,675 1035,691.300 1064.900,674.300 1092,690 991.900,748 967.100,758.300 940.500,763.300 912,763.300 884.500,758 860.600,747.300 844.500,735 835.800,718.300 835.800,701.700 844,686.300 860.600,673 891.800,655 690.700,539.300 665,520.700 648.500,498.700";
const hole =
  "1180.200,536 1181.100,527.300 1190.200,516.700 1207.700,509.700 1229.300,506.700 1247.600,508.700 1264.200,514.700 1276.100,525 1279.300,536.700 1274.300,549 1262.300,558 1242.100,564 1221.900,564.700 1201.700,560 1188.400,551.700 1181.100,542.700";

function Viewport() {
  return (
    <main className="min-w-0 flex-1 border-t border-l border-[#6e6e6e] bg-linear-to-b from-[#4f76a4] to-white">
      <svg className="block size-full" viewBox="243 207 1435 754" preserveAspectRatio="xMidYMid meet" role="img" aria-label="Part model">
        <defs>
          <linearGradient id="endWall">
            <stop offset="0" stopColor="#6b6a73" />
            <stop offset="1" stopColor="#82818c" />
          </linearGradient>
          <linearGradient id="bossWall">
            <stop offset="0" stopColor="#6d6c75" />
            <stop offset=".2" stopColor="#787781" />
            <stop offset=".45" stopColor="#82818b" />
            <stop offset=".6" stopColor="#94939e" />
            <stop offset=".68" stopColor="#a6a5b0" />
            <stop offset=".78" stopColor="#94939e" />
            <stop offset="1" stopColor="#7b7a84" />
          </linearGradient>
          <linearGradient id="farWall">
            <stop offset="0" stopColor="#8a8994" />
            <stop offset="1" stopColor="#777680" />
          </linearGradient>
          <linearGradient id="bore">
            <stop offset="0" stopColor="#777680" />
            <stop offset=".22" stopColor="#82818b" />
            <stop offset=".38" stopColor="#9a99a4" />
            <stop offset=".48" stopColor="#a5a4af" />
            <stop offset=".62" stopColor="#7c7b85" />
            <stop offset=".85" stopColor="#787781" />
            <stop offset="1" stopColor="#84838d" />
          </linearGradient>
        </defs>
        <g stroke="#17171b" strokeWidth="1" strokeLinejoin="round">
          <polygon points="690.700,539.300 891.800,655 845,690 835.800,715.700 690.700,632.300" fill="#7a7983" />
          <polygon points="641.600,474 648.500,498.700 665,520.700 690.700,539.300 690.700,632.300 666,614 649,591.300 641.600,569.300" fill="url(#endWall)" />
          <polygon points="1007,675 1168.200,582.300 1168.200,675 1092,718.700 1007,730" fill="#85848f" />
          <polygon points="1168.200,582.300 1196.200,598.300 1168.200,614" fill="#75747e" />
          <polygon points={topFace} fill="#8a8995" />
          <polygon points="1166.400,615.700 1193.900,631 1193.900,724.300 1166.400,709" fill="#7b7a84" />
          <polygon points="1193.900,631 1294.500,573.300 1294.500,666.700 1193.900,724.300" fill="#84838e" />
          <polygon points="1294.500,573.300 1311.500,560.300 1320.600,544 1320.600,637.300 1311.500,653.300 1294.500,666.700" fill="url(#farWall)" />
          <polygon points="991.900,748 1092,690 1092,783.300 991.900,841.300" fill="#84838e" />
          <polygon
            points="835.800,718.300 844.500,735 860.600,747.300 884.500,758 912,763.300 940.500,763.300 967.100,758.300 991.900,748 991.900,841.300 967.100,851.300 940.500,856.300 912,856.300 884.500,851.300 860.600,841.300 844.500,828.300 835.800,812"
            fill="url(#bossWall)"
          />
          <polygon points={hole} fill="url(#bore)" />
          <polygon points={hole} fill="url(#bore)" transform="translate(-303 175)" />
          <rect x="747.500" y="445.500" width="129" height="75" fill="#a1a1ac" />
          <path d="M748 519.500h128" stroke="#73727b" />
        </g>
        <g fontFamily="'Liberation Sans', sans-serif" fontSize="9" textAnchor="middle">
          <path d="M280 924V914" stroke="#5a5ae0" strokeWidth="2" />
          <path d="M276.500 916l3.500-8 3.500 8z" fill="#2a2ab0" />
          <path d="M280 925l-8-4" stroke="#2fae3a" strokeWidth="2.500" />
          <path d="M266 917l9 .5-4 6z" fill="#0d7a1a" />
          <path d="M282 924l7-4" stroke="#e86a6a" strokeWidth="2.500" />
          <path d="M295 917l-9 .5 4 6z" fill="#a31212" />
          <text x="281" y="903" fill="#1414e8">Z</text>
          <text x="261" y="915" fill="#17d321">Y</text>
          <text x="300" y="915" fill="#ee2222">X</text>
        </g>
      </svg>
    </main>
  );
}

function DocumentTabs() {
  return (
    <div className="flex h-[22px] shrink-0 items-end border-t border-l border-[#7890b4] bg-linear-to-b from-[#d9e5f3] to-[#edf4fb] pr-[7px]">
      <button className="relative flex h-5 w-[110px] items-center pl-9 font-bold text-black">
        <svg className="absolute inset-0 size-full" viewBox="0 0 110 20" preserveAspectRatio="none" aria-hidden="true">
          <path d="M2 20L19 2.500Q20 .500 23 .500H107q2 0 2 2V20" fill="#fff" stroke="#1b1b1b" />
        </svg>
        <span className="relative">Scene1*</span>
        <svg className="relative mr-[7px] ml-auto" width="8" height="8" viewBox="0 0 8 8" stroke="#555" strokeWidth="1.300" aria-hidden="true">
          <path d="M.5 .500l7 7M7.500 .500l-7 7" />
        </svg>
      </button>
      <button aria-label="List documents" className="mb-2 ml-auto">
        <svg width="9" height="5" viewBox="0 0 9 5" aria-hidden="true">
          <path d="M0 0h9L4.500 5z" fill="#6b6f76" />
        </svg>
      </button>
    </div>
  );
}

/* ---------- status bar ---------- */

function StatusButton({ icon, width, menu, active }: { icon: string; width: string; menu?: boolean; active?: boolean }) {
  return (
    <button title={icon} className={"flex h-[21px] shrink-0 items-center gap-1 " + (menu ? "justify-between px-1 " : "justify-center ") + (active ? hot + " " : "") + width}>
      {icons[icon]}
      {menu && <Caret />}
    </button>
  );
}

function StatusBar() {
  return (
    <footer className="flex h-6 shrink-0 items-center border-t border-[#7d95b8] bg-linear-to-b from-[#dfe9f5] to-[#adc0da] text-[#1e395b]">
      <p className="flex-1 pl-[2px]">For Help, press F1</p>
      <div className="flex h-full items-center border-l border-[#8fa4c4] pr-[3px]">
        <span className="w-[154px] pl-[14px] whitespace-pre">View size: 1437 x  755</span>
        <span className="w-[87px]">Units: in, deg</span>
        <StatusButton icon="zoomPage" width="w-6" />
        <StatusButton icon="zoomWin" width="w-9" menu />
        <StatusButton icon="camView" width="w-9" menu />
        <StatusButton icon="cubeBlue" width="w-[35px]" menu />
        <StatusButton icon="orbit" width="w-[35px]" menu />
        <StatusButton icon="wedge" width="w-[22px]" />
        <StatusButton icon="glasses" width="w-8" menu />
        <StatusButton icon="cubePlain" width="w-[31px]" menu active />
        <StatusButton icon="part" width="w-[34px]" menu />
        <StatusButton icon="goCursorGray" width="w-6" />
        <StatusButton icon="pointer" width="w-[23px]" active />
        <StatusButton icon="boxSelect2" width="w-[26px]" />
        <Combo label="Filter" value="Any" options={["Any", "Part"]} className="mr-[2px] h-5 w-[88px] bg-[#f0f5fb]" />
        <Combo label="Style" value="Default" options={["Default"]} className="mr-[3px] h-5 w-[63px] bg-[#f0f5fb]" />
        <StatusButton icon="orgBlue" width="w-[22px]" />
      </div>
    </footer>
  );
}

export default function App() {
  return (
    <div className="flex h-screen flex-col overflow-hidden bg-[#bacce5] font-['Lato',sans-serif] text-[12px] leading-4 text-[#1e395b]">
      <Header />
      <Ribbon />
      <SelectionBar />
      <div className="flex min-h-0 flex-1">
        <LeftStrips />
        <div className="flex min-w-0 flex-1 flex-col">
          <DocumentTabs />
          <div className="flex min-h-0 flex-1">
            <ScenePanel />
            <div className="flex min-w-0 flex-1 pr-[2px] pb-[2px]">
              <Viewport />
            </div>
          </div>
        </div>
      </div>
      <div className="flex h-[23px] shrink-0 items-start pt-[2px] pl-1">
        <button className="flex h-[21px] items-center gap-[2px] border border-[#a38f52] bg-linear-to-b from-[#fdeeb5] to-[#f9dc84] pr-px pl-[2px] text-[#6f6648]">
          {icons.catalogBox}
          Catalog Browser
        </button>
      </div>
      <StatusBar />
    </div>
  );
}
